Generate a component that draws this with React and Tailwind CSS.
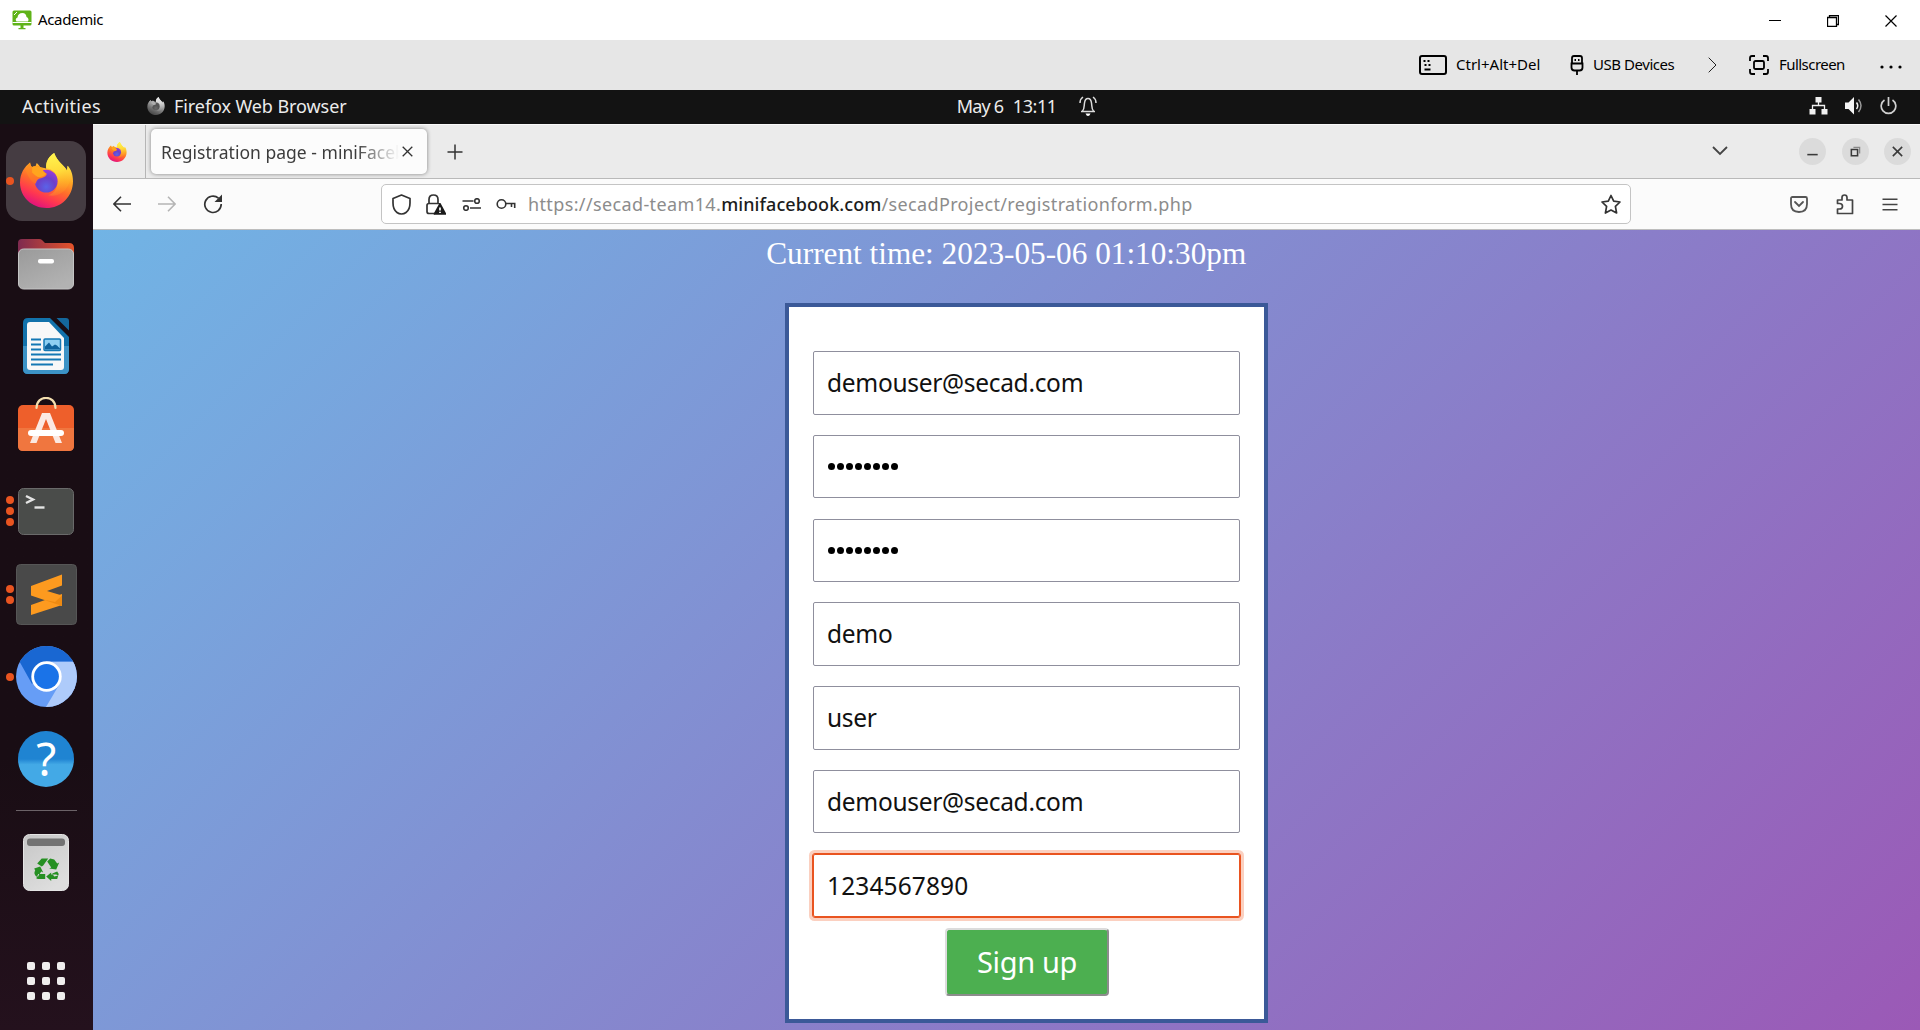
import { useId } from "react";

function Firefox({ className }) {
  const id = useId();
  return (
    <svg viewBox="0 0 158 164" className={className}>
      <defs>
        <linearGradient id={id + "b"} x1="0.8" y1="0.1" x2="0.4" y2="1">
          <stop offset="0.05" stopColor="#fff04a" />
          <stop offset="0.35" stopColor="#ffa424" />
          <stop offset="0.58" stopColor="#ff6a2c" />
          <stop offset="0.8" stopColor="#ff3750" />
          <stop offset="1" stopColor="#e3157a" />
        </linearGradient>
        <linearGradient id={id + "f"} x1="0.3" y1="0" x2="0.6" y2="1">
          <stop offset="0" stopColor="#fff44f" />
          <stop offset="0.45" stopColor="#ffe03c" />
          <stop offset="1" stopColor="#ff9d20" stopOpacity="0.2" />
        </linearGradient>
        <radialGradient id={id + "g"} cx="0.5" cy="0.75" r="0.8">
          <stop offset="0" stopColor="#5a63e8" />
          <stop offset="0.5" stopColor="#6c40c8" />
          <stop offset="1" stopColor="#a03be0" />
        </radialGradient>
        <linearGradient id={id + "h"} x1="0" y1="0" x2="0" y2="1">
          <stop offset="0" stopColor="#ff9a1f" />
          <stop offset="1" stopColor="#ff6a2a" />
        </linearGradient>
      </defs>
      <path
        d="M30 28C14 40 0 60 0 88c0 44 36 76 79 76s79-34 79-80c0-20-6-36-16-46l-2 14C130 34 112 28 102 0 86 10 76 26 78 46L60 42C58 38 54 34 50 30c-2 4-3 8-4 10-6 0-8 1-10 2-4-4-5-8-6-14z"
        fill={`url(#${id}b)`}
      />
      <path
        d="M102 0C86 10 76 26 78 46c20 0 34 18 34 38 0 22-10 36-28 42 40 8 66-22 68-64-2-10-6-18-10-24l-2 14C130 34 112 28 102 0z"
        fill={`url(#${id}f)`}
        opacity="0.85"
      />
      <circle cx="78" cy="84" r="34" fill={`url(#${id}g)`} />
      <path
        d="M30 28c-6 8-12 16-12 24 8 26 20 34 28 40 4-8 4-12 12-16 14-2 20-6 22-14-8-4-12-10-20-20-8-4-16-4-24 0-4-4-5-8-6-14z"
        fill={`url(#${id}h)`}
      />
      <path d="M36 42c16-6 26 2 34 6-4 4-2 8 8 14-6 8-12 8-20 10-8 0-16-8-22-14z" fill="#ffa51e" />
    </svg>
  );
}

function Dots({ count }) {
  return (
    <div className="flex w-2 flex-col gap-[3px]">
      {Array.from({ length: count }, (_, i) => (
        <span key={i} className="h-2 w-2 rounded-full bg-[#e95420]" />
      ))}
    </div>
  );
}

function DockItem({ dots = 0, active, children }) {
  return (
    <div className="relative flex h-[82.600px] w-full shrink-0 items-center justify-center">
      <div className={active ? "-mt-px flex h-20 w-20 items-center justify-center rounded-[16px] bg-[#453c42]" : "flex items-center justify-center"}>
        {children}
      </div>
      <div className="absolute inset-y-0 left-1.5 flex items-center">
        <Dots count={dots} />
      </div>
    </div>
  );
}

function FilesIcon() {
  return (
    <svg width="56" height="52" viewBox="0 0 56 52">
      <defs>
        <linearGradient id="filesBack"><stop offset="0" stopColor="#7e2a50" /><stop offset="1" stopColor="#e5532a" /></linearGradient>
        <linearGradient id="filesFront" x2="0.6" y2="1"><stop offset="0" stopColor="#9a9a9a" /><stop offset="1" stopColor="#b2b2b2" /></linearGradient>
      </defs>
      <path d="M0 20V5q0-4 4-4h17q2 0 3 1l3 3h24q5 0 5 5v12z" fill="url(#filesBack)" />
      <rect x="0.5" y="11" width="55" height="40" rx="5" fill="url(#filesFront)" stroke="#c4c4c4" />
      <rect x="20" y="21" width="16" height="4.5" rx="2" fill="#fff" />
    </svg>
  );
}

function WriterIcon() {
  return (
    <svg width="46" height="56" viewBox="0 0 46 56">
      <path d="M5 0h22l19 19v32q0 5-5 5H5q-5 0-5-5V5q0-5 5-5z" fill="#1272ab" />
      <path d="M0 28h46v23q0 5-5 5H5q-5 0-5-5z" fill="#3c93c6" />
      <path d="M33.500 0H43q3 0 3 3v9.500z" fill="#14679c" />
      <path d="M7 4h19l15 16v29q0 3-3 3H7q-3 0-3-3V7q0-3 3-3z" fill="#f8f8f8" />
      <path d="M8 21.500h10M8 26.500h10M8 31.500h10M8 36.500h30M8 41.500h30M8 46.500h22" stroke="#1478b4" strokeWidth="2.2" />
      <rect x="21" y="21" width="16.500" height="11.500" rx="1" fill="#8ed0f2" stroke="#1478b4" strokeWidth="1.500" />
      <path d="M22 31.500v-3l4-4 3 4 3-2 2 1 3 3v1z" fill="#0e639c" />
    </svg>
  );
}

function SoftwareIcon() {
  return (
    <svg width="56" height="54" viewBox="0 0 56 54">
      <rect y="8" width="56" height="46" rx="5" fill="#ee5f2b" />
      <path d="M0 31h56v18q0 5-5 5H5q-5 0-5-5z" fill="#f0763f" />
      <path d="M18.500 11C18.500-2.500 37.500-2.500 37.500 11" fill="none" stroke="#f4dfae" strokeWidth="2.200" strokeLinecap="round" />
      <path d="M12 46 24 16h8l12 30h-6.500L28 22 18.500 46z" fill="#fbe9e2" />
      <rect x="10" y="33" width="36" height="6" rx="3" fill="#fff" />
    </svg>
  );
}

function TerminalIcon() {
  return (
    <svg width="56" height="47" viewBox="0 0 56 47">
      <rect x="0.500" y="0.500" width="55" height="46" rx="5" fill="#4a4c4a" stroke="#6a6a6a" />
      <path d="M8 8l7 3.500L8 15" fill="none" stroke="#e4e4e4" strokeWidth="2.400" />
      <path d="M16.500 19.500h10" stroke="#e4e4e4" strokeWidth="2.400" />
    </svg>
  );
}

function SublimeIcon() {
  return (
    <svg width="61" height="61" viewBox="0 0 61 61">
      <rect x="0.500" y="0.500" width="60" height="60" rx="4" fill="#494949" stroke="#565656" />
      <path d="M15 41l31-11v11L15 51z" fill="#fd9a1f" />
      <path d="M15 22l31-11.500v11L31 27l15 4.500V42L15 31.500z" fill="#fd9a1f" />
      <path d="M27 35.500 46 42V31.500L39 38z" fill="#ee8a12" />
    </svg>
  );
}

function ChromiumIcon() {
  return (
    <svg width="61" height="61" viewBox="0 0 61 61">
      <defs><clipPath id="chromium"><circle cx="30.500" cy="30.500" r="30.500" /></clipPath></defs>
      <g clipPath="url(#chromium)">
        <path d="M0 0h61v61H0z" fill="#669df6" />
        <path d="M30 15.500h31V61H30l13-22z" fill="#aecbfa" />
        <path d="M0 0h61v15.500H30.500L16 38 3.500 15.500H0z" fill="#1967d2" />
      </g>
      <circle cx="30.500" cy="30.500" r="15.200" fill="#fff" />
      <circle cx="30.500" cy="30.500" r="12.400" fill="#1a73e8" />
    </svg>
  );
}

function TrashIcon() {
  return (
    <svg width="46" height="57" viewBox="0 0 46 57">
      <defs><linearGradient id="bin" x2="0.600" y2="1"><stop offset="0" stopColor="#c6c6c6" /><stop offset="1" stopColor="#dedede" /></linearGradient></defs>
      <rect x="0.500" y="0.500" width="45" height="56" rx="6" fill="url(#bin)" stroke="#e4e4e4" />
      <rect x="4" y="4.500" width="38" height="7.500" rx="3" fill="#737373" />
      <g transform="translate(23.200 36.500)" fill="#269023">
        <path d="M-9-7-4.500-12H2L-3-5-4.500-4zM4-12l4 1 3 4 2-1-3 7-7-1 2-1-4-6z" />
        <path d="M-12-2l6-2 3 6-2-1-3 5h-2q-3-3-1-6zM-10 8h8V3.500h-6zM-9 8.500l8 0V3.500h-6z" />
        <path d="M11 1 6 3 8 6l4-1q1-2-1-4zM11 8.500H5v2L0 6l5-4v2h5l2 1z" />
      </g>
    </svg>
  );
}

function Dock() {
  return (
    <aside className="flex w-[92.500px] shrink-0 flex-col items-center bg-linear-to-b from-[#190d14] from-70% to-[#24111d] pt-[15.800px]">
      <DockItem dots={1} active><Firefox className="h-[55px] w-[53px]" /></DockItem>
      <DockItem><FilesIcon /></DockItem>
      <DockItem><WriterIcon /></DockItem>
      <DockItem><div className="-mt-[9px]"><SoftwareIcon /></div></DockItem>
      <DockItem dots={3}><TerminalIcon /></DockItem>
      <DockItem dots={2}><SublimeIcon /></DockItem>
      <DockItem dots={1}><ChromiumIcon /></DockItem>
      <DockItem>
        <div className="flex h-14 w-14 items-center justify-center rounded-full bg-linear-to-b from-[#1f84d2] from-50% to-[#43a9e6] to-60% font-['Noto_Sans',sans-serif] text-[46px] leading-none text-white">
          <span className="-mt-0.5">?</span>
        </div>
      </DockItem>
      <div className="mt-[9.500px] h-px w-[61px] shrink-0 bg-[#6b6267]" />
      <div className="mt-[23px]"><TrashIcon /></div>
      <div className="mt-[71px] grid grid-cols-3 gap-[7px]">
        {Array.from({ length: 9 }, (_, i) => <span key={i} className="h-2 w-2 rounded-[2px] bg-[#f0eeee]" />)}
      </div>
    </aside>
  );
}

function WindowTitle() {
  return (
    <header className="flex h-10 items-center bg-white pl-3">
      <svg width="20" height="20" viewBox="0 0 20 20" className="shrink-0">
        <rect x="0.500" y="0.500" width="19" height="15" rx="1.500" fill="#5fb318" />
        <path d="M4.500 11.500q-2-2.500 1-4 .5-4.500 5-4.500 3.500 0 4 4 3 1.500 1.500 4.500z" fill="#fff" />
        <path d="M2 5l3-3" stroke="#fff" strokeWidth="1" />
        <path d="M0.500 12.500h19" stroke="#fff" strokeWidth="1" />
        <path d="M8.500 15h3v3h2v1.300h-7V18h2z" fill="#5fb318" />
      </svg>
      <span className="ml-1.5 pb-0.5 text-[15px] tracking-[-0.350px] text-black">Academic</span>
      <div className="ml-auto flex items-center gap-[46px] pt-px pr-[23px] text-black">
        <svg width="12" height="12" viewBox="0 0 12 12"><path d="M0 5.500h12" stroke="currentColor" /></svg>
        <svg width="12" height="12" viewBox="0 0 12 12" fill="none" stroke="currentColor" strokeWidth="1.300"><path d="M.5 2.500h9v9h-9zM2.500 2V.5h9v9H10" /></svg>
        <svg width="12" height="12" viewBox="0 0 12 12" stroke="currentColor" strokeWidth="1.200"><path d="M.5.5l11 11M11.500.5l-11 11" /></svg>
      </div>
    </header>
  );
}

function ViewerToolbar() {
  return (
    <div className="flex h-[50px] items-center justify-end bg-[#e6e6e6] pr-[18px] text-[15px] text-black">
      <svg width="28" height="20" viewBox="0 0 28 20" fill="none" stroke="#000" strokeWidth="2">
        <rect x="1" y="1" width="26" height="18" rx="2" />
        <path d="M4.500 6h2M8.500 6h2M5.500 10h2M9.500 10h2M5.500 14.500h6" strokeWidth="1.800" />
      </svg>
      <span className="ml-[9.500px] w-[85px] pb-0.5 whitespace-nowrap">Ctrl+Alt+Del</span>
      <svg width="14" height="20" viewBox="0 0 14 20" fill="none" stroke="#000" strokeWidth="1.800" className="ml-[29px]">
        <path d="M2 8.500V3q0-2 2-2h6q2 0 2 2v5.500M1.500 8.500h11v4q0 3-3 3h-5q-3 0-3-3zM7 15.500V20" />
        <path d="M4.500 5h1.500M8 5h1.500" />
      </svg>
      <span className="ml-[9px] w-[81.500px] pb-0.5 whitespace-nowrap tracking-[-0.450px]">USB Devices</span>
      <svg width="9" height="16" viewBox="0 0 9 16" fill="none" stroke="#222" className="ml-[33px]"><path d="M.7.7 8 8 .7 15.300" /></svg>
      <svg width="20" height="20" viewBox="0 0 20 20" fill="none" stroke="#000" strokeWidth="1.800" className="ml-[32.500px]">
        <path d="M1 6V3q0-2 2-2h3M14 1h3q2 0 2 2v3M19 14v3q0 2-2 2h-3M6 19H3q-2 0-2-2v-3" />
        <rect x="5" y="6" width="10" height="8" rx="1.500" />
      </svg>
      <span className="ml-[10px] w-[66px] pb-0.5 whitespace-nowrap tracking-[-0.550px]">Fullscreen</span>
      <svg width="22" height="4" viewBox="0 0 22 4" className="mt-1 ml-[35px]"><circle cx="2" cy="2" r="1.600" /><circle cx="11" cy="2" r="1.600" /><circle cx="20" cy="2" r="1.600" /></svg>
    </div>
  );
}

function GnomeBar() {
  return (
    <div className="grid h-[34px] grid-cols-[1fr_auto_1fr] items-center bg-[#131313] pb-0.5 text-[18px] leading-6 whitespace-nowrap text-[#ececec]">
      <div className="flex items-center pl-[22px]">
        <span className="w-[79px] tracking-[0.400px]">Activities</span>
        <Firefox className="ml-[46px] h-[18px] w-[18px] grayscale" />
        <span className="ml-[9px] tracking-[-0.080px]">Firefox Web Browser</span>
      </div>
      <div className="flex items-center pl-[134px]">
        <span className="w-[47px] tracking-[-0.800px]">May 6</span>
        <span className="ml-[9px] w-[42px] tracking-[-0.400px]">13:11</span>
        <svg width="18" height="20" viewBox="0 0 18 20" fill="none" stroke="#dcdcdc" strokeWidth="1.500" className="ml-[24.500px]">
          <path d="M2 15.500h14M3.500 15c2-2 1.500-5 2-8q.5-4.500 3.500-4.500T12.500 7c.5 3 0 6 2 8M1 7q0-4 3-6M17 7q0-4-3-6" />
          <path d="M6.500 17.500h5q-1 2.500-2.500 2.500t-2.500-2.500z" fill="#fff" stroke="none" />
        </svg>
      </div>
      <div className="flex items-center justify-end gap-[17px] pr-[23.500px]">
        <svg width="19" height="18" viewBox="0 0 18 18" fill="#f0f0f0"><path d="M6 0h6v5.500H6zM0 12h6v5.500H0zM12 12h6v5.500h-6z" /><path d="M9 5v3.500M3 12V8.500h12V12" fill="none" stroke="#f0f0f0" strokeWidth="1.300" /></svg>
        <svg width="18" height="18" viewBox="0 0 18 18"><path d="M0 5.500h3.500L9 0v17.500l-5.500-5.500H0z" fill="#f4f4f4" /><path d="M11.500 5.500q2.500 3.300 0 6.500" fill="none" stroke="#f0f0f0" strokeWidth="1.500" /><path d="M13.500 2.500q5 6 0 12.500" fill="none" stroke="#999" strokeWidth="1.500" /></svg>
        <svg width="17" height="18" viewBox="0 0 17 18" fill="none" stroke="#d0d0d0" strokeWidth="1.700"><path d="M8.500 0v9M4.500 3a7.300 7.300 0 1 0 8 0" /></svg>
      </div>
    </div>
  );
}

function TabStrip() {
  return (
    <div className="flex h-[55px] items-center border-t border-b border-t-[#fafafa] border-b-[#b9b9b9] bg-[#ebebeb] text-[#333]">
      <div className="flex h-full w-[53.500px] items-center border-r border-[#b5b5b5] pl-[14.500px]"><Firefox className="h-5 w-5" /></div>
      <div className="ml-[5px] flex h-[45px] w-[276px] items-center rounded-[5px] bg-[#fcfcfc] pl-[10px] shadow-[0_0_4px_rgba(0,0,0,0.45)]">
        <span className="w-[238px] overflow-hidden mask-r-from-82% pt-px text-[17.500px] tracking-[0.020px] whitespace-nowrap text-[#3c3c3c]">Registration page - miniFacebook</span>
        <svg width="11" height="11" viewBox="0 0 11 11" stroke="currentColor" strokeWidth="1.300" className="ml-[2.500px]"><path d="M.7.7l9.600 9.600M10.300.7.7 10.300" /></svg>
      </div>
      <svg width="16" height="16" viewBox="0 0 16 16" stroke="currentColor" strokeWidth="1.500" className="ml-5"><path d="M8 .5v15M.5 8h15" /></svg>
      <div className="ml-auto flex items-center pr-[9px] pb-px">
        <svg width="16" height="10" viewBox="0 0 16 10" fill="none" stroke="#444" strokeWidth="1.800" className="mr-[71px]"><path d="M1 1l7 7 7-7" /></svg>
        <div className="flex gap-[15.500px]">
          <WindowButton><path d="M8 16h10" /></WindowButton>
          <WindowButton><path d="M9 11h6v6H9z" /><path d="M11 9h6v6" stroke="#8a8a8a" strokeWidth="1.200" /></WindowButton>
          <WindowButton><path d="M8.500 8.500l9 9M17.500 8.500l-9 9" /></WindowButton>
        </div>
      </div>
    </div>
  );
}

function WindowButton({ children }) {
  return (
    <span className="h-[27px] w-[27px] rounded-full bg-[#dbdbdb]">
      <svg width="27" height="27" viewBox="0 0 26 26" fill="none" stroke="#3a3a3a" strokeWidth="1.500">{children}</svg>
    </span>
  );
}

function NavBar() {
  return (
    <div className="flex h-[51px] items-center border-b border-[#bdbdbd] bg-[#fbfbfb] text-[#333]">
      <svg width="18" height="16" viewBox="0 0 18 16" fill="none" stroke="currentColor" strokeWidth="1.600" className="ml-[20.500px]"><path d="M18 8H1M8 .8.900 8 8 15.200" /></svg>
      <svg width="18" height="16" viewBox="0 0 18 16" fill="none" stroke="#b5b5b5" strokeWidth="1.600" className="ml-[27px]"><path d="M0 8h17M10 .8 17.100 8 10 15.200" /></svg>
      <svg width="20" height="20" viewBox="0 0 20 20" fill="none" stroke="currentColor" strokeWidth="1.700" className="ml-[26.500px]"><path d="M15.500 4.200A8.200 8.200 0 1 0 18.200 10" /><path d="M19 .5V8h-7.500z" fill="currentColor" stroke="none" /></svg>
      <div className="ml-[158px] flex h-[40px] w-[1250px] items-center rounded-[5px] border border-[#c4c4c4] bg-white">
        <svg width="19" height="21" viewBox="0 0 19 21" fill="none" stroke="currentColor" strokeWidth="1.700" className="ml-[10px]"><path d="M9.500 1 18 4.500v4.500q0 6.500-4 9.500-2 1.500-4.500 1.500T5 18.500Q1 15.500 1 9V4.500z" strokeLinejoin="round" /></svg>
        <svg width="20" height="21" viewBox="0 0 20 21" fill="none" stroke="currentColor" strokeWidth="1.700" className="ml-[15px]"><path d="M3 9.500V5.500q0-4.500 4.500-4.500T12 5.500v4M9 19.500H3q-2 0-2-2v-6q0-2 2-2h9.500q1.500 0 1.500 1" /><path d="M14 10l5.500 10h-11z" fill="#1b1b1b" stroke="#1b1b1b" strokeLinejoin="round" /><path d="M14 13.500v3M14 17.700V19" stroke="#fff" /></svg>
        <svg width="19" height="13" viewBox="0 0 19 13" fill="none" stroke="currentColor" strokeWidth="1.600" className="ml-[16px]"><path d="M.5 3h11M8 10h11" /><circle cx="15" cy="3" r="2.300" /><circle cx="4" cy="10" r="2.300" /></svg>
        <svg width="20" height="12" viewBox="0 0 20 12" fill="none" stroke="currentColor" strokeWidth="1.600" className="ml-[15px]"><circle cx="5.500" cy="6" r="4.300" /><path d="M10 5.500h9.500M15.500 5.500V9M18.700 5.500V10" /></svg>
        <span className="ml-[12.500px] text-[18px] tracking-[0.370px] whitespace-nowrap text-[#8c8c8c]">
          https://secad-team14.<span className="font-medium tracking-[0.080px] text-[#1c1c1c]">minifacebook.com</span>/secadProject/registrationform.php
        </span>
        <svg width="20" height="21" viewBox="0 0 20 21" fill="none" stroke="currentColor" strokeWidth="1.700" strokeLinejoin="round" className="mr-[9px] ml-auto"><path d="M10 1.500l2.700 5.700 6.300.800-4.600 4.400 1.200 6.600L10 16l-5.600 3 1.200-6.600L1 8l6.300-.800z" /></svg>
      </div>
      <div className="ml-auto flex items-center gap-[28px] pr-[22px]">
        <svg width="18" height="17" viewBox="0 0 18 17" fill="none" stroke="#555" strokeWidth="1.800"><path d="M2.500 1h13q1.500 0 1.500 1.500V8q0 8-8 8T1 8V2.500Q1 1 2.500 1z" /><path d="M5 6l4 4 4-4" strokeLinecap="round" /></svg>
        <svg width="18" height="21" viewBox="0 0 18 21" fill="none" stroke="#444" strokeWidth="1.700" strokeLinejoin="round"><path d="M1.500 9.500V6H6V3.500q0-2.500 2.500-2.500T11 3.500V6h5.500v13.500h-15V15H3.500q3 0 3-2.700t-3-2.800z" /></svg>
        <svg width="16" height="13" viewBox="0 0 16 13" stroke="#444" strokeWidth="1.500"><path d="M.5 1.200h15M.5 6.500h15M.5 11.800h15" /></svg>
      </div>
    </div>
  );
}

const fields = [
  { value: "demouser@secad.com" },
  { value: "••••••••", secret: true },
  { value: "••••••••", secret: true },
  { value: "demo" },
  { value: "user" },
  { value: "demouser@secad.com" },
  { value: "1234567890", focused: true },
];

function Field({ value, secret, focused }) {
  return (
    <div
      className={
        focused
          ? "flex h-[63.500px] items-center rounded-[2px] border border-[#e95420] bg-white pl-[14px] tracking-[0.120px] ring-[4px] ring-[#fbd0c0] outline-[1.500px] outline-[#e95420]"
          : "flex h-[63.500px] items-center rounded-[2px] border border-[#8f8f9d] bg-white pl-[14px] tracking-[-0.300px]"
      }
    >
      {secret ? (
        <span className="flex gap-[2px]">
          {value.split("").map((_, i) => <span key={i} className="h-[7px] w-[7px] rounded-full bg-black" />)}
        </span>
      ) : (
        <span className="-ml-px pt-px text-[24.500px] leading-none text-[#111]">{value}</span>
      )}
    </div>
  );
}

function Page() {
  return (
    <main className="flex flex-1 flex-col bg-[linear-gradient(135deg,#71b4e5,#9b59b6)]">
      <div className="flex justify-center pt-[6px]">
        <h1 className="font-['Liberation_Serif',serif] text-[31.250px] leading-[36px] text-white">Current time: 2023-05-06 01:10:30pm</h1>
      </div>
      <form className="mt-[30.500px] ml-[692.500px] flex h-[720px] w-[483px] shrink-0 flex-col border-4 border-[#3b5998] bg-white px-6 pt-[44.500px]">
        <div className="flex flex-col gap-[20.300px]">
          {fields.map((f, i) => <Field key={i} {...f} />)}
        </div>
        <button type="button" className="mt-[10.500px] ml-[132px] h-[68px] w-[164px] shrink-0 rounded-[4px] border-2 border-t-[#dcdcdc] border-r-[#8c8c8c] border-b-[#8c8c8c] border-l-[#dcdcdc] bg-[#4caf50] text-[29px] leading-none tracking-[-0.350px] text-white">
          Sign up
        </button>
      </form>
    </main>
  );
}

export default function App() {
  return (
    <div className="flex h-[1030px] w-[1920px] flex-col overflow-hidden font-['Noto_Sans',sans-serif]">
      <WindowTitle />
      <ViewerToolbar />
      <GnomeBar />
      <div className="flex min-h-0 flex-1">
        <Dock />
        <div className="flex min-w-0 flex-1 flex-col">
          <TabStrip />
          <NavBar />
          <Page />
        </div>
      </div>
    </div>
  );
}
